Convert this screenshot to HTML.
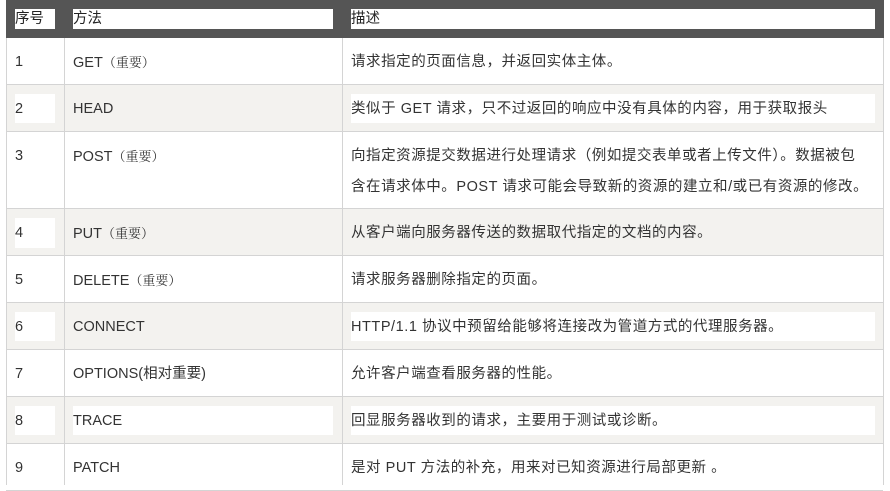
<!DOCTYPE html>
<html><head><meta charset="utf-8"><style>
body{margin:0;width:890px;height:485px;background:#fff;overflow:hidden;position:relative;font-family:"Liberation Sans","Noto Sans CJK SC",sans-serif;font-size:14.5px;color:#333}
div{position:absolute}
.hd{left:6px;top:0;width:878px;height:38px;background:#555}
.hb{background:#fff;top:9px;height:20px;line-height:21px;color:#222;font-size:14.5px}
.row{left:6px;width:877px;border-bottom:1px solid #d4d4d4}
.g{background:#f3f2ef}
.vl{top:38px;width:1px;height:447px;background:#d4d4d4}
.t{line-height:20px;white-space:nowrap;margin-top:1px}
.d{letter-spacing:0.55px}
.wb{background:#fff}
.zy{font-family:"Noto Serif CJK SC",serif;font-size:13px}
</style></head><body>
<div class="hd"></div>
<div class="hb" style="left:15px;width:40px">序号</div>
<div class="hb" style="left:73px;width:260px">方法</div>
<div class="hb" style="left:351px;width:524px">描述</div>

<div class="row" style="top:38px;height:46px"></div>
<div class="row g" style="top:85px;height:46px"></div>
<div class="row" style="top:132px;height:76px"></div>
<div class="row g" style="top:209px;height:46px"></div>
<div class="row" style="top:256px;height:46px"></div>
<div class="row g" style="top:303px;height:46px"></div>
<div class="row" style="top:350px;height:46px"></div>
<div class="row g" style="top:397px;height:46px"></div>
<div class="row" style="top:444px;height:46px"></div>

<div class="wb" style="left:15px;top:94px;width:40px;height:29px"></div>
<div class="wb" style="left:351px;top:94px;width:524px;height:29px"></div>
<div class="wb" style="left:15px;top:218px;width:40px;height:30px"></div>
<div class="wb" style="left:15px;top:312px;width:40px;height:29px"></div>
<div class="wb" style="left:351px;top:312px;width:524px;height:29px"></div>
<div class="wb" style="left:15px;top:406px;width:40px;height:29px"></div>
<div class="wb" style="left:73px;top:406px;width:260px;height:29px"></div>
<div class="wb" style="left:351px;top:406px;width:524px;height:29px"></div>

<div class="vl" style="left:6px"></div>
<div class="vl" style="left:64px"></div>
<div class="vl" style="left:342px"></div>
<div class="vl" style="left:883px"></div>

<div class="t" style="left:15px;top:51px">1</div>
<div class="t" style="left:73px;top:51px">GET<span class="zy">（重要）</span></div>
<div class="t d" style="left:351px;top:51px">请求指定的页面信息，并返回实体主体。</div>

<div class="t" style="left:15px;top:98px">2</div>
<div class="t" style="left:73px;top:98px">HEAD</div>
<div class="t d" style="left:351px;top:98px">类似于 GET 请求，只不过返回的响应中没有具体的内容，用于获取报头</div>

<div class="t" style="left:15px;top:145px">3</div>
<div class="t" style="left:73px;top:145px">POST<span class="zy">（重要）</span></div>
<div class="t d" style="left:351px;top:145px">向指定资源提交数据进行处理请求（例如提交表单或者上传文件）。数据被包</div>
<div class="t d" style="left:351px;top:176px">含在请求体中。POST 请求可能会导致新的资源的建立和/或已有资源的修改。</div>

<div class="t" style="left:15px;top:222px">4</div>
<div class="t" style="left:73px;top:222px">PUT<span class="zy">（重要）</span></div>
<div class="t d" style="left:351px;top:222px">从客户端向服务器传送的数据取代指定的文档的内容。</div>

<div class="t" style="left:15px;top:269px">5</div>
<div class="t" style="left:73px;top:269px">DELETE<span class="zy">（重要）</span></div>
<div class="t d" style="left:351px;top:269px">请求服务器删除指定的页面。</div>

<div class="t" style="left:15px;top:316px">6</div>
<div class="t" style="left:73px;top:316px">CONNECT</div>
<div class="t d" style="left:351px;top:316px">HTTP/1.1 协议中预留给能够将连接改为管道方式的代理服务器。</div>

<div class="t" style="left:15px;top:363px">7</div>
<div class="t" style="left:73px;top:363px">OPTIONS(相对重要)</div>
<div class="t d" style="left:351px;top:363px">允许客户端查看服务器的性能。</div>

<div class="t" style="left:15px;top:410px">8</div>
<div class="t" style="left:73px;top:410px">TRACE</div>
<div class="t d" style="left:351px;top:410px">回显服务器收到的请求，主要用于测试或诊断。</div>

<div class="t" style="left:15px;top:457px">9</div>
<div class="t" style="left:73px;top:457px">PATCH</div>
<div class="t d" style="left:351px;top:457px">是对 PUT 方法的补充，用来对已知资源进行局部更新 。</div>
</body></html>
